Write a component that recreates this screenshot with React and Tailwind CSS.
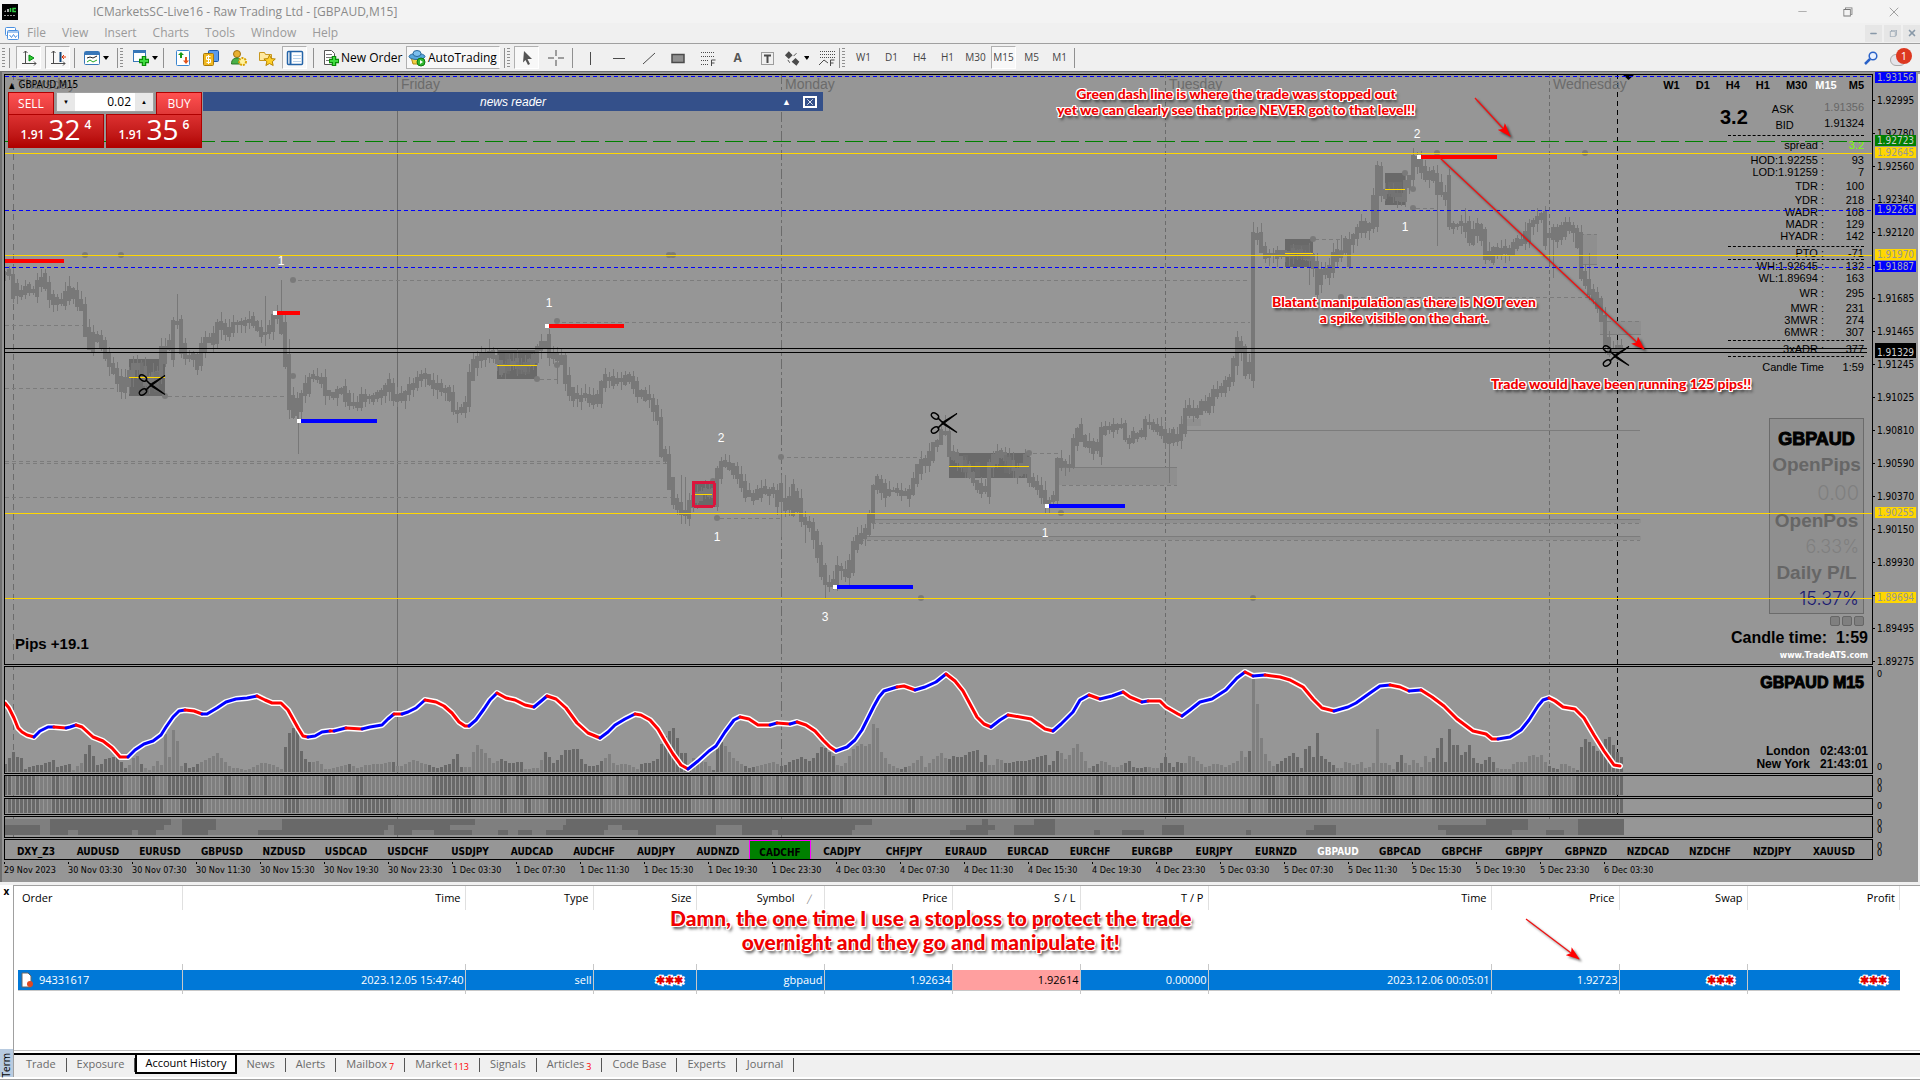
import { useState } from 'react';
import { FiMinus, FiX } from 'react-icons/fi';
import { VscChromeRestore } from 'react-icons/vsc';

const MENU = ['File', 'View', 'Insert', 'Charts', 'Tools', 'Window', 'Help'];
const PERIODS = ['W1', 'D1', 'H4', 'H1', 'M30', 'M15', 'M5', 'M1'];
const SYMBOLS = [
  'DXY_Z3', 'AUDUSD', 'EURUSD', 'GBPUSD', 'NZDUSD', 'USDCAD', 'USDCHF', 'USDJPY', 'AUDCAD', 'AUDCHF',
  'AUDJPY', 'AUDNZD', 'CADCHF', 'CADJPY', 'CHFJPY', 'EURAUD', 'EURCAD', 'EURCHF', 'EURGBP', 'EURJPY',
  'EURNZD', 'GBPAUD', 'GBPCAD', 'GBPCHF', 'GBPJPY', 'GBPNZD', 'NZDCAD', 'NZDCHF', 'NZDJPY', 'XAUUSD',
];
const TIMES = [
  '29 Nov 2023', '30 Nov 03:30', '30 Nov 07:30', '30 Nov 11:30', '30 Nov 15:30', '30 Nov 19:30', '30 Nov 23:30',
  '1 Dec 03:30', '1 Dec 07:30', '1 Dec 11:30', '1 Dec 15:30', '1 Dec 19:30', '1 Dec 23:30',
  '4 Dec 03:30', '4 Dec 07:30', '4 Dec 11:30', '4 Dec 15:30', '4 Dec 19:30', '4 Dec 23:30',
  '5 Dec 03:30', '5 Dec 07:30', '5 Dec 11:30', '5 Dec 15:30', '5 Dec 19:30', '5 Dec 23:30', '6 Dec 03:30',
];
const PRICES = [
  '1.92995', '1.92780', '1.92560', '1.92340', '1.92120', '', '1.91685', '1.91465', '1.91245',
  '1.91025', '1.90810', '1.90590', '1.90370', '1.90150', '1.89930', '', '1.89495', '1.89275',
];

// close line, [x, y] in window pixels
const CLOSES = [
  [5, 272], [14, 275], [16, 295], [22, 293], [27, 287], [35, 292], [39, 282], [43, 277], [49, 289], [53, 300], [65, 303],
  [69, 289], [73, 290], [78, 298], [84, 309], [87, 329], [91, 348], [96, 335], [102, 337], [106, 352], [110, 362],
  [116, 370], [120, 381], [122, 392], [127, 383], [131, 375], [137, 362], [143, 368], [147, 385], [155, 377], [162, 372],
  [165, 338], [171, 357], [174, 322], [180, 322], [182, 342], [186, 357], [196, 355], [200, 366], [204, 343], [210, 335],
  [216, 341], [219, 323], [224, 327], [229, 335], [235, 323], [245, 322], [253, 318], [261, 330], [265, 333], [271, 331],
  [275, 315], [282, 315], [286, 347], [289, 373], [292, 408], [298, 420], [301, 387], [306, 398], [309, 378], [322, 377],
  [327, 392], [335, 393], [345, 387], [349, 403], [359, 405], [365, 397], [376, 397], [384, 393], [392, 383], [397, 402],
  [402, 397], [410, 390], [420, 378], [427, 375], [433, 385], [441, 388], [451, 392], [455, 410], [461, 412], [469, 403],
  [471, 377], [477, 360], [488, 353], [497, 355], [504, 373], [512, 360], [522, 368], [535, 360], [539, 347], [545, 342],
  [546, 325], [549, 355], [563, 357], [567, 378], [571, 390], [578, 400], [584, 395], [598, 403], [604, 383], [610, 375],
  [616, 382], [633, 378], [640, 393], [652, 398], [656, 410], [660, 420], [662, 450], [669, 460], [671, 480], [675, 500],
  [679, 505], [687, 515], [693, 500], [703, 493], [712, 490], [714, 512], [718, 477], [724, 462], [734, 468], [742, 477],
  [746, 493], [756, 498], [762, 488], [771, 492], [779, 487], [781, 523], [785, 490], [791, 512], [797, 482], [801, 518],
  [813, 525], [818, 543], [822, 563], [826, 583], [836, 583], [838, 568], [844, 570], [850, 575], [854, 547], [860, 538],
  [867, 532], [872, 518], [875, 487], [881, 477], [885, 495], [893, 490], [909, 495], [916, 480], [922, 460], [930, 465],
  [933, 447], [940, 442], [944, 430], [948, 433], [950, 452], [958, 457], [967, 467], [975, 480], [987, 493], [991, 467],
  [999, 452], [1007, 458], [1020, 475], [1028, 458], [1030, 477], [1038, 485], [1042, 488], [1046, 505], [1056, 497],
  [1058, 462], [1073, 465], [1075, 443], [1079, 427], [1085, 442], [1093, 443], [1099, 455], [1101, 430], [1124, 425],
  [1126, 437], [1132, 442], [1136, 432], [1142, 435], [1148, 422], [1162, 428], [1164, 435], [1169, 443], [1171, 433],
  [1177, 443], [1183, 430], [1189, 405], [1197, 415], [1203, 402], [1207, 412], [1213, 395], [1224, 388], [1232, 378],
  [1240, 340], [1246, 355], [1249, 383], [1252, 373], [1253, 233], [1260, 235], [1263, 250], [1270, 255], [1283, 253],
  [1290, 257], [1297, 250], [1312, 257], [1317, 268], [1320, 292], [1323, 272], [1330, 273], [1337, 252], [1343, 252],
  [1347, 265], [1348, 242], [1357, 237], [1362, 223], [1368, 230], [1375, 223], [1377, 168], [1382, 168], [1383, 195],
  [1390, 190], [1403, 200], [1407, 185], [1412, 177], [1413, 158], [1418, 158], [1423, 168], [1430, 180], [1437, 172],
  [1442, 203], [1447, 178], [1450, 225], [1457, 225], [1467, 223], [1470, 245], [1477, 227], [1482, 227], [1485, 245],
  [1488, 257], [1493, 258], [1497, 248], [1510, 253], [1517, 243], [1527, 240], [1530, 225], [1540, 217], [1545, 212],
  [1548, 245], [1555, 230], [1562, 240], [1565, 222], [1573, 227], [1579, 233], [1582, 270], [1587, 282], [1592, 293],
  [1598, 297], [1602, 313], [1605, 323], [1607, 340], [1612, 353], [1620, 347],
];

// long wicks: x, top, bottom
const SPIKES = [
  [69, 276, 300], [177, 294, 322], [221, 312, 340], [265, 296, 346], [281, 280, 322], [289, 339, 385], [298, 415, 454],
  [489, 339, 360], [557, 365, 384], [681, 475, 520], [685, 477, 522], [781, 500, 537], [785, 475, 498], [805, 518, 543],
  [825, 565, 598], [881, 475, 500], [945, 415, 435], [1045, 500, 513], [1081, 418, 440], [1169, 440, 483],
  [1253, 222, 240], [1261, 223, 240], [1309, 255, 285], [1341, 235, 262], [1377, 163, 175], [1437, 175, 246],
  [1465, 208, 225], [1549, 240, 265], [1553, 235, 278], [1589, 253, 290], [1617, 340, 358],
];

const VOLUMES = [
  [5, 8], [13, 20], [17, 15], [21, 14], [25, 3], [33, 6], [41, 7], [53, 12], [57, 5], [69, 8], [73, 2], [81, 9], [86, 20],
  [90, 29], [94, 11], [98, 5], [106, 14], [118, 15], [126, 2], [134, 16], [138, 16], [142, 5], [150, 2], [158, 12],
  [162, 5], [165, 38], [169, 15], [173, 42], [177, 31], [181, 6], [185, 9], [190, 3], [198, 9], [206, 12], [217, 19],
  [222, 13], [230, 5], [246, 2], [262, 9], [270, 8], [281, 3], [285, 25], [289, 39], [294, 45], [298, 40], [302, 15],
  [310, 9], [318, 11], [326, 2], [350, 8], [358, 3], [366, 7], [380, 8], [392, 11], [398, 5], [405, 8], [413, 12],
  [425, 8], [437, 4], [449, 8], [457, 18], [461, 5], [469, 5], [473, 20], [477, 27], [485, 19], [493, 9], [501, 13],
  [509, 9], [521, 10], [525, 3], [537, 4], [545, 20], [553, 9], [557, 12], [565, 22], [578, 23], [582, 10], [590, 5],
  [597, 7], [609, 18], [614, 7], [626, 8], [638, 2], [641, 8], [652, 10], [658, 14], [662, 32], [668, 40], [673, 44],
  [677, 34], [681, 19], [685, 19], [689, 5], [693, 14], [705, 10], [713, 2], [717, 28], [722, 30], [726, 24], [734, 13],
  [742, 7], [750, 4], [762, 7], [774, 10], [782, 5], [790, 11], [802, 15], [810, 10], [818, 20], [822, 26], [826, 23],
  [834, 15], [838, 4], [846, 10], [854, 25], [862, 28], [868, 23], [873, 48], [877, 44], [881, 20], [889, 8], [900, 3],
  [910, 6], [921, 16], [925, 5], [934, 14], [941, 19], [947, 12], [953, 16], [960, 14], [966, 18], [972, 21], [978, 22],
  [981, 10], [986, 19], [990, 3], [998, 14], [1006, 8], [1018, 11], [1026, 11], [1038, 15], [1046, 17], [1050, 3],
  [1058, 23], [1066, 12], [1073, 24], [1078, 29], [1082, 17], [1088, 4], [1094, 6], [1102, 12], [1114, 4], [1126, 9],
  [1130, 12], [1134, 3], [1145, 5], [1158, 4], [1165, 15], [1172, 4], [1178, 11], [1184, 7], [1190, 18], [1198, 10],
  [1206, 4], [1214, 9], [1226, 5], [1238, 11], [1242, 24], [1246, 12], [1249, 21], [1253, 93], [1257, 68], [1261, 34],
  [1265, 18], [1272, 5], [1280, 10], [1285, 14], [1295, 20], [1301, 4], [1305, 23], [1309, 26], [1313, 15], [1317, 39],
  [1321, 16], [1330, 9], [1340, 2], [1346, 11], [1354, 6], [1362, 11], [1366, 2], [1373, 9], [1377, 43], [1381, 9],
  [1387, 9], [1393, 3], [1401, 17], [1407, 5], [1413, 12], [1421, 5], [1425, 16], [1430, 8], [1434, 16], [1441, 34],
  [1445, 10], [1449, 43], [1453, 27], [1457, 27], [1462, 15], [1469, 27], [1474, 11], [1480, 7], [1490, 16], [1494, 8],
  [1498, 3], [1510, 3], [1514, 10], [1526, 10], [1530, 18], [1538, 15], [1542, 18], [1546, 7], [1550, 5], [1558, 3],
  [1562, 10], [1570, 5], [1578, 2], [1582, 33], [1586, 33], [1590, 29], [1598, 20], [1605, 33], [1610, 36], [1614, 24],
  [1618, 18], [1622, 14],
];
const VOLUME_DARK = [
  [5, 70], [82, 126], [138, 143], [185, 201], [284, 312], [348, 352], [393, 397], [429, 462], [500, 522], [545, 604],
  [640, 692], [712, 724], [745, 756], [780, 836], [900, 908], [948, 988], [1005, 1060], [1092, 1100], [1124, 1148],
  [1160, 1182], [1248, 1252], [1276, 1336], [1394, 1404], [1430, 1496], [1548, 1560], [1576, 1626],
];
const TREND_DARK = [
  [5, 12], [17, 35], [46, 48], [52, 58], [70, 122], [138, 157], [166, 203], [225, 232], [246, 250], [264, 268], [282, 299],
  [325, 335], [357, 364], [430, 476], [484, 488], [501, 508], [517, 528], [548, 604], [617, 620], [629, 692], [701, 704],
  [709, 714], [732, 752], [758, 762], [774, 780], [788, 802], [812, 830], [845, 848], [885, 889], [950, 966], [975, 986],
  [1010, 1026], [1035, 1048], [1094, 1102], [1132, 1136], [1162, 1166], [1177, 1182], [1205, 1208], [1258, 1275],
  [1287, 1300], [1308, 1330], [1357, 1364], [1377, 1396], [1410, 1414], [1430, 1492], [1517, 1522], [1549, 1558], [1574, 1626],
];
const MOMENTUM_DARK = [
  [9, 40], [50, 126], [138, 164], [178, 202], [284, 300], [348, 392], [452, 472], [498, 508], [524, 532], [548, 604],
  [640, 690], [711, 716], [740, 845], [907, 916], [950, 988], [1016, 1056], [1092, 1100], [1163, 1184], [1248, 1252],
  [1268, 1328], [1380, 1420], [1430, 1528], [1552, 1626],
];
const BLOCKS = [
  [[50, 171], [182, 216], [282, 475], [566, 872], [982, 988], [1034, 1055], [1486, 1528], [1578, 1624]],
  [[5, 40], [50, 164], [182, 216], [282, 388], [394, 450], [563, 608], [622, 716], [742, 855], [966, 995], [1014, 1055], [1162, 1184], [1314, 1336], [1438, 1528], [1578, 1624]],
  [[5, 40], [50, 68], [78, 132], [138, 156], [182, 208], [258, 384], [394, 412], [434, 472], [498, 508], [518, 532], [546, 604], [638, 716], [742, 772], [778, 852], [950, 988], [1014, 1055], [1094, 1100], [1122, 1144], [1162, 1184], [1246, 1251], [1306, 1336], [1446, 1512], [1546, 1564], [1578, 1624]],
];

// oscillator runs, colour flips on every entry: red, blue, red...
const WAVE = [
  [[5, 703], [9, 708], [14, 718], [18, 728], [22, 732], [27, 735], [34, 737]],
  [[40, 731], [48, 727], [54, 727]], [[66, 728]], [[70, 727], [76, 725]],
  [[82, 727], [93, 737], [103, 741], [112, 748], [120, 757], [128, 757]],
  [[135, 750], [144, 744], [153, 741], [161, 735], [166, 727], [173, 717], [179, 711], [185, 710]],
  [[194, 711], [202, 714]], [[207, 714], [217, 708], [226, 702], [236, 699], [247, 698], [257, 696]],
  [[265, 700], [272, 703], [281, 703], [288, 710], [293, 719], [298, 728], [303, 736], [308, 737]],
  [[315, 736], [322, 732], [330, 731]], [[334, 731]], [[346, 728]], [[362, 729]],
  [[370, 727], [382, 725], [388, 719], [394, 714]], [[402, 714]], [[408, 712], [416, 708], [425, 700]],
  [[436, 702], [444, 706], [452, 713], [459, 722], [465, 726], [469, 726]],
  [[476, 720], [484, 709], [490, 700], [497, 693]], [[506, 698], [515, 700], [525, 705], [534, 707]],
  [[540, 702], [547, 696]], [[556, 699], [566, 708], [577, 723], [588, 733], [600, 738]],
  [[608, 732], [615, 725], [625, 719], [635, 714]],
  [[641, 715], [650, 720], [658, 729], [665, 741], [673, 754], [681, 765], [688, 769]],
  [[698, 761], [709, 751], [716, 746], [725, 732], [734, 720], [740, 717]], [[749, 719], [758, 725], [770, 725]],
  [[777, 723]], [[790, 724]], [[797, 722]], [[806, 725], [815, 731], [823, 740], [830, 747], [836, 751]],
  [[847, 747], [855, 740], [862, 730], [868, 718], [874, 706], [879, 697], [884, 691], [897, 687]],
  [[904, 686], [915, 690]], [[925, 687], [936, 682], [946, 674]],
  [[955, 681], [963, 691], [970, 704], [977, 717], [984, 724], [991, 727]], [[1000, 720], [1008, 715]],
  [[1020, 717], [1031, 719], [1045, 729], [1053, 731]], [[1061, 724], [1073, 712], [1080, 700], [1089, 695]],
  [[1100, 699]], [[1112, 696], [1123, 692]], [[1130, 697], [1142, 702]], [[1148, 701]],
  [[1160, 701], [1166, 707], [1178, 714], [1182, 716]],
  [[1190, 710], [1200, 702], [1212, 699], [1226, 690], [1237, 678], [1245, 672]], [[1253, 676]], [[1265, 675]],
  [[1280, 677], [1290, 680], [1303, 687], [1313, 699], [1322, 708], [1334, 711]],
  [[1348, 707], [1356, 703], [1370, 693], [1380, 686], [1390, 685]], [[1400, 687], [1409, 691]], [[1421, 690]],
  [[1432, 697], [1444, 706], [1457, 719], [1473, 731], [1486, 734], [1492, 739], [1498, 739]],
  [[1510, 737], [1521, 730], [1529, 720], [1538, 706], [1543, 700], [1549, 698]],
  [[1555, 701], [1563, 707], [1575, 709], [1584, 718], [1594, 735], [1604, 751], [1614, 765], [1620, 766]],
];

const COLUMNS = [
  { label: 'Order', width: 'w-[164px]' },
  { label: 'Time', width: 'w-[283px]', value: '2023.12.05 15:47:40' },
  { label: 'Type', width: 'w-32', value: 'sell' },
  { label: 'Size', width: 'w-[103px]', masked: true },
  { label: 'Symbol', width: 'w-32', value: 'gbpaud' },
  { label: 'Price', width: 'w-32', value: '1.92634' },
  { label: 'S / L', width: 'w-32', value: '1.92614', hit: true },
  { label: 'T / P', width: 'w-32', value: '0.00000' },
  { label: 'Time', width: 'w-[283px]', value: '2023.12.06 00:05:01' },
  { label: 'Price', width: 'w-32', value: '1.92723' },
  { label: 'Swap', width: 'w-32', masked: true },
  { label: 'Profit', width: '', masked: true },
];
const TABS = [
  ['Trade'], ['Exposure'], ['Account History'], ['News'], ['Alerts'], ['Mailbox', 7], ['Market', 113],
  ['Signals'], ['Articles', 3], ['Code Base'], ['Experts'], ['Journal'],
];

const X_BARS = Array.from({ length: 405 }, (_, i) => 5 + i * 4);

const sample = (points, x) => {
  const i = points.findIndex((p) => p[0] >= x);
  if (i === -1) return points[points.length - 1][1];
  if (i === 0) return points[0][1];
  const [x0, y0] = points[i - 1];
  const [x1, y1] = points[i];
  return Math.round(y0 + ((y1 - y0) * (x - x0)) / (x1 - x0));
};

const noise = (i) => {
  const n = Math.sin(i * 12.9898) * 43758.5453;
  return n - Math.floor(n);
};

const inRanges = (ranges, x) => ranges.some(([a, b]) => x >= a && x < b);

const Candles = () => {
  let bodies = '';
  let wicks = '';
  X_BARS.forEach((x, i) => {
    const open = sample(CLOSES, x - 2);
    const close = sample(CLOSES, x + 3);
    const top = Math.min(open, close) - Math.round(noise(i) * 4);
    const bottom = Math.max(open, close) + 1 + Math.round(noise(i + 900) * 4);
    bodies += `M${x - 2} ${top}h4V${bottom}h-4z`;
    wicks += `M${x} ${top - Math.round(noise(i + 300) * 9)}h1V${bottom + Math.round(noise(i + 600) * 9)}h-1z`;
  });
  SPIKES.forEach(([x, top, bottom]) => {
    wicks += `M${x} ${top}h1V${bottom}h-1z`;
  });
  return (
    <g fill="#787878">
      <path d={bodies} />
      <path d={wicks} />
    </g>
  );
};

const DayLines = () => (
  <g fill="none" stroke="#6b6b6b" shapeRendering="crispEdges">
    <path d="M13.5 74V860" strokeDasharray="6 4" />
    <path d="M397.5 74V860" />
    <path d="M781.5 74V860" strokeDasharray="10 3 3 3" />
    <path d="M1165.5 74V860M1549.5 74V860" strokeDasharray="4 3" />
    <path d="M1617.5 74V846" stroke="#000" strokeDasharray="5 4" />
  </g>
);

const Scissors = ({ x, y }) => (
  <g transform={`translate(${x} ${y})`} fill="none" stroke="#000" strokeLinecap="round">
    <ellipse cx="-9" cy="-7" rx="4" ry="2.6" transform="rotate(35 -9 -7)" strokeWidth="1.4" />
    <ellipse cx="-9" cy="7" rx="4" ry="2.6" transform="rotate(-35 -9 7)" strokeWidth="1.4" />
    <path d="M-6 -5L-1 0M-6 5L-1 0" strokeWidth="1.6" />
    <path d="M-2 1.5L13 -9.5L0 -1.5zM-2 -1.5L13 9.5L0 1.5z" strokeWidth="1.2" fill="#000" />
  </g>
);

const ArrowHead = () => (
  <marker id="head" viewBox="0 0 14 10" refX="13" refY="5" markerWidth="14" markerHeight="10" markerUnits="userSpaceOnUse" orient="auto">
    <path d="M0 0L14 5L0 10L3 5z" fill="#f00" />
  </marker>
);

// panel top edges are given so every drawing shares the window's pixel grid
const Panel = ({ top, height, draw, children }) => (
  <div className={`relative mb-px overflow-hidden border border-black ${height}`}>
    <svg className="absolute inset-0 h-full w-full" aria-hidden="true">
      <g transform={`translate(-5 ${-top - 1})`}>
        <DayLines />
        {draw}
      </g>
    </svg>
    {children}
  </div>
);

const Stripes = ({ top, height, dark }) => (
  <g>
    {X_BARS.map((x) => (
      <rect key={x} x={x - 1} y={top} width="3" height={height} fill={inRanges(dark, x) ? '#696969' : '#7f7f7f'} />
    ))}
  </g>
);

const PriceDrawing = () => (
  <g>
    <g fill="#8f8f8f">
      <path d="M1055 467h122v18h-122zM1580 234h17v30h-17zM1600 321h41v13h-41zM872 519h769v4H872zM860 536h781v4H860zM1181 419h20v7h-20z" />
    </g>
    <g stroke="#7c7c7c" fill="none" shapeRendering="crispEdges">
      <path
        strokeDasharray="4 3"
        d="M5 325.5H87M5 388.5H116M298 280.5H1250M168 396.5H292M5 461.5H668M5 463.5H668M5 497.5H672M562 322.5H1250M787 457.5H922M720 518.5H780M1033 453.5H1061M872 523.5H1640M860 540.5H1640M1055 485.5H1177M1340 297.5H1590M1315 239.5H1340M1416 208.5H1435M1580 234.5H1597M1600 321.5H1640M540 379.5H557"
      />
      <path d="M1183 430.5H1640M872 519.5H1640M860 536.5H1640M1055 467.5H1177M1580 264.5H1597M1600 334.5H1641" />
    </g>
    <g fill="#696969">
      <path d="M129 359h36v37h-36zM497 350h40v29h-40zM693 482h20v24h-20zM949 453h80v25h-80zM1285 239h28v28h-28zM1385 173h20v32h-20z" />
    </g>
    <Candles />
    <g fill="#6f6f6f" fillOpacity="0.6">
      <path d="M140 362h4v20h-4zM154 372h5v20h-5zM505 352h5v22h-5zM516 362h14v12h-14zM963 455h5v18h-5zM975 462h5v15h-5zM1004 455h8v18h-8zM1290 245h20v14h-20zM1388 182h14v15h-14z" />
    </g>
    <g fill="#7a7a7a">
      {[[85, 255], [121, 255], [293, 280], [293, 376], [165, 396], [537, 379], [557, 321], [557, 365], [669, 255], [673, 255], [781, 457], [717, 518], [713, 481], [1029, 453], [1061, 513], [921, 598], [1253, 598], [1437, 153], [1585, 153], [1313, 239], [1405, 173], [1413, 189], [1413, 208], [1341, 253], [1341, 297]].map(([x, y]) => (
        <circle key={`${x}-${y}`} cx={x} cy={y} r="3" />
      ))}
    </g>
    <g shapeRendering="crispEdges">
      <path d="M129 377.5h36M497 365.5h40M695 494.5h17M949 466.5h80M1285 253.5h28M1385 189.5h20" stroke="#ffd700" />
      <rect x="693" y="482" width="21" height="24" rx="1" fill="none" stroke="#dc143c" strokeWidth="3" />
      <path d="M5 261h59M277 313h23M548 326h76M1419 157h78" stroke="#f00" strokeWidth="4" />
      <path d="M300 421h77M836 587h77M1048 506h77" stroke="#00f" strokeWidth="4" />
      <path d="M273 311h4v4h-4zM545 324h4v4h-4zM1417 155h4v4h-4zM297 419h4v4h-4zM833 585h4v4h-4zM1045 504h4v4h-4z" fill="#fff" />
      <line x1="5" x2="100%" y1="348.5" y2="348.5" stroke="#000" />
      <line x1="5" x2="100%" y1="352.5" y2="352.5" stroke="#000" />
    </g>
    <Scissors x={152} y={385} />
    <Scissors x={944} y={423} />
    <Scissors x={1616} y={356} />
    <g fill="#fff" fontSize="12" textAnchor="middle" fontFamily="Liberation Sans, sans-serif">
      {[['1', 281, 265], ['1', 549, 307], ['2', 721, 442], ['1', 717, 541], ['3', 825, 621], ['1', 1045, 537], ['2', 1417, 138], ['1', 1405, 231]].map(([n, x, y]) => (
        <text key={`${x}`} x={x} y={y}>{n}</text>
      ))}
    </g>
    <g fill="#6b6b6b" fontSize="14" fontFamily="Liberation Sans, sans-serif">
      <text x="17" y="89">Thursday</text>
      <text x="401" y="89">Friday</text>
      <text x="785" y="89">Monday</text>
      <text x="1169" y="89">Tuesday</text>
      <text x="1553" y="89">Wednesday</text>
    </g>
    <path d="M1623 75h11l-5.500 5z" fill="#000" />
  </g>
);

const LevelLines = () => (
  <svg className="pointer-events-none absolute inset-0 h-full w-full" aria-hidden="true">
    <g transform="translate(0 -75)" shapeRendering="crispEdges">
      {[153.5, 255.5, 513.5, 598.5].map((y) => (
        <line key={y} x2="100%" y1={y} y2={y} stroke="#ffd700" />
      ))}
      {[76.5, 210.5, 267.5].map((y) => (
        <line key={y} x2="100%" y1={y} y2={y} stroke="#00f" strokeDasharray="4 3" />
      ))}
      <line x2="100%" y1="141.5" y2="141.5" stroke="#008000" strokeDasharray="18 6" />
    </g>
    <g transform="translate(-5 -75)">
      <defs>
        <ArrowHead />
      </defs>
      <g stroke="#f01010" strokeWidth="1.300" className="drop-shadow-[2px_2px_1px_rgba(0,0,0,0.5)]">
        <line x1="1475" y1="98" x2="1510" y2="136" markerEnd="url(#head)" />
        <line x1="1440" y1="158" x2="1644" y2="349" markerEnd="url(#head)" />
      </g>
    </g>
  </svg>
);

const Callout = ({ className, children }) => (
  <p
    className={`absolute text-center font-['Lato',sans-serif] font-black whitespace-nowrap text-[#f00000] [text-shadow:1px_0_#fff,-1px_0_#fff,0_1px_#fff,0_-1px_#fff,1px_1px_#fff,-1px_-1px_#fff,1px_-1px_#fff,-1px_1px_#fff,2px_3px_3px_rgba(0,0,0,0.7)] ${className}`}
  >
    {children}
  </p>
);

const StatRow = ({ label, value, height = 'h-3', tone = '' }) => (
  <div className={`flex items-center ${height}`}>
    <dt className="w-24 flex-none text-right whitespace-nowrap">
      <span className="-ml-10">{label} :</span>
    </dt>
    <dd className={`flex-1 text-right ${tone}`}>{value}</dd>
  </div>
);

const Stats = () => (
  <section className="absolute top-0 right-2 font-['Liberation_Sans',sans-serif] text-[11px] leading-3 text-black">
    <ul className="flex h-5 items-center justify-end gap-4 font-bold">
      {PERIODS.slice(0, 7).map((p) => (
        <li key={p} className={p === 'M15' ? '-mx-1 text-white' : p === 'M30' ? '-mr-1' : ''}>{p}</li>
      ))}
    </ul>
    <div className="ml-auto flex h-10 w-36 items-center pt-1">
      <strong className="text-xl">3.2</strong>
      <div className="w-[62px] pr-4 text-right leading-4">ASK<br />BID</div>
      <div className="flex-1 pb-1 text-right leading-4"><span className="text-[#666]">1.91356</span><br />1.91324</div>
    </div>
    <dl className="ml-auto w-[136px]">
      <div className="border-y border-dashed border-black">
        <StatRow label="spread" value="3.2" height="h-[17px]" tone="text-[#7fff00]" />
      </div>
      <div className="border-b border-dashed border-black pb-1">
        <StatRow label="HOD:1.92255" value="93" />
        <StatRow label="LOD:1.91259" value="7" />
        <StatRow label="TDR" value="100" height="h-4" />
        <StatRow label="YDR" value="218" />
        <StatRow label="WADR" value="108" />
        <StatRow label="MADR" value="129" />
        <StatRow label="HYADR" value="142" />
      </div>
      <div className="border-b border-dashed border-black">
        <StatRow label="PTO" value="-71" />
      </div>
      <div className="border-b border-dashed border-black pb-0.5">
        <StatRow label="WH:1.92645" value="132" />
        <StatRow label="WL:1.89694" value="163" />
        <StatRow label="WR" value="295" height="h-[18px]" />
        <StatRow label="MWR" value="231" />
        <StatRow label="3MWR" value="274" />
        <StatRow label="6MWR" value="307" />
      </div>
      <div className="border-b border-dashed border-black">
        <StatRow label="3xADR" value="377" height="h-[15px]" />
      </div>
      <div className="flex h-5 items-center">
        <dt className="w-24 text-right">Candle Time</dt>
        <dd className="flex-1 text-right">1:59</dd>
      </div>
    </dl>
  </section>
);

const AccountCard = () => (
  <section className="absolute right-1 bottom-0.5 flex flex-col items-end font-['Liberation_Sans',sans-serif] font-bold text-black">
    <div className="mr-1 flex h-[196px] w-[95px] flex-col border border-[#6b6b6b] bg-[#8f8f8f] px-1 pt-1 text-center text-[#666]">
      <h2 className="h-8 text-lg leading-8 text-black [-webkit-text-stroke:1px_black]">GBPAUD</h2>
      <p className="flex h-6 justify-center text-[19px] leading-5 whitespace-nowrap">OpenPips</p>
      <p className="h-8 text-right font-['Inter',sans-serif] text-xl font-light text-[#7f7f7f]">0.00</p>
      <p className="flex h-6 justify-center text-[19px] leading-5 whitespace-nowrap">OpenPos</p>
      <p className="h-7 text-right font-['Inter',sans-serif] text-lg leading-6 font-light text-[#7f7f7f]">6.33%</p>
      <p className="h-6 text-[19px] leading-5 whitespace-nowrap">Daily P/L</p>
      <p className="text-right font-['Inter',sans-serif] text-lg leading-6 font-light text-[#191970]">15.37%</p>
    </div>
    <div className="mt-0.5 mr-1 flex gap-0.5">
      <span className="size-2.5 rounded-xs border border-[#666] bg-[#7f7f7f]" />
      <span className="size-2.5 rounded-xs border border-[#666] bg-[#7f7f7f]" />
      <span className="size-2.5 rounded-xs border border-[#666] bg-[#7f7f7f]" />
    </div>
    <p className="text-base leading-6 whitespace-pre">Candle time:  1:59</p>
    <p className="font-['DejaVu_Sans',sans-serif] text-[8px] leading-3 text-white">www.TradeATS.com</p>
  </section>
);

const QuoteBox = ({ big, pip }) => (
  <div className="flex h-[34px] flex-1 items-end justify-center gap-1 border border-[#b00000] bg-linear-to-b from-[#dc3030] to-[#b00000] pb-1 text-white">
    <span className="text-xs leading-4 font-semibold">1.91</span>
    <span className="text-[28px] leading-7">{big}</span>
    <span className="self-start pt-1 text-xs leading-3 font-semibold">{pip}</span>
  </div>
);

const OneClick = () => (
  <form className="absolute top-[17px] left-[3px] w-[194px] font-['Open_Sans',sans-serif]">
    <div className="flex justify-between">
      <button type="button" className="h-[22px] w-[46px] border border-b-0 border-[#b00000] bg-linear-to-b from-[#ff5050] to-[#e03838] text-xs text-white">SELL</button>
      <div className="flex h-5 w-[98px] border border-[#a0a0a0] bg-white">
        <button type="button" aria-label="Less volume" className="w-[18px] bg-[#e8e8e8] text-[6px] text-black">▼</button>
        <input aria-label="Volume" defaultValue="0.02" className="w-[60px] px-1 text-right text-xs text-black" />
        <button type="button" aria-label="More volume" className="w-[18px] bg-[#e8e8e8] text-[6px] text-black">▲</button>
      </div>
      <button type="button" className="h-[22px] w-[46px] border border-b-0 border-[#b00000] bg-linear-to-b from-[#ff5050] to-[#e03838] text-xs text-white">BUY</button>
    </div>
    <div className="flex gap-0.5">
      <QuoteBox big="32" pip="4" />
      <QuoteBox big="35" pip="6" />
    </div>
  </form>
);

const NewsReader = () => (
  <div className="absolute top-[17px] left-[198px] flex h-[19px] w-[620px] items-center bg-[#34508a] text-white">
    <span className="flex-1 text-center font-['Liberation_Sans',sans-serif] text-xs italic">news reader</span>
    <button type="button" aria-label="Collapse" className="absolute right-8 text-[9px]">▲</button>
    <button type="button" aria-label="Close news" className="absolute right-1.5 flex h-3 w-3.5 items-center justify-center border-2 border-white">
      <FiX size={10} />
    </button>
  </div>
);

const PriceTag = ({ className, children }) => (
  <span className={`absolute left-0.5 w-[41px] text-center text-[10px] leading-[11px] ${className}`}>{children}</span>
);

const PriceAxis = () => (
  <div className="relative h-[592px] pt-2.5 text-[10px] text-black">
    {PRICES.map((price, i) => (
      <div key={i} className="flex h-[33px] items-center before:mr-0.5 before:h-px before:w-0.5 before:bg-black">{price}</div>
    ))}
    <PriceTag className="-top-0.5 bg-[#0000ff] text-[#b0b0b0]">1.93156</PriceTag>
    <PriceTag className="top-[61px] bg-[#008000] text-[#d0d0d0]">1.92723</PriceTag>
    <PriceTag className="top-[73px] bg-[#ffd700] text-[#969696]">1.92645</PriceTag>
    <PriceTag className="top-[130px] bg-[#0000ff] text-[#b0b0b0]">1.92265</PriceTag>
    <PriceTag className="top-[175px] bg-[#ffd700] text-[#969696]">1.91970</PriceTag>
    <PriceTag className="top-[187px] bg-[#0000ff] text-[#b0b0b0]">1.91887</PriceTag>
    <PriceTag className="top-[269px] bg-black pt-1 text-[#d0d0d0]">1.91329</PriceTag>
    <PriceTag className="top-[433px] bg-[#ffd700] text-[#969696]">1.90255</PriceTag>
    <PriceTag className="top-[518px] bg-[#ffd700] text-[#969696]">1.89694</PriceTag>
  </div>
);

const Wave = () => {
  const runs = WAVE.map((run, i) => (i === 0 ? run : [WAVE[i - 1][WAVE[i - 1].length - 1], ...run]));
  return (
    <g fill="none" strokeLinejoin="round" strokeLinecap="round">
      <polyline points={WAVE.flat().join(' ')} stroke="#fff" strokeWidth="6" />
      {runs.map((run, i) => (
        <polyline key={i} points={run.join(' ')} stroke={i % 2 ? '#00f' : '#f00'} strokeWidth="3" />
      ))}
    </g>
  );
};

const ChartWindow = () => (
  <main className="flex border-t border-l-2 border-[#707070] bg-[#969696] pt-0.5 pl-0.5">
    <div className="min-w-0 flex-1">
      <Panel top={74} height="h-[591px]" draw={<PriceDrawing />}>
        <p className="absolute top-1 left-1 font-['DejaVu_Sans_Condensed',sans-serif] text-[10px] leading-3 text-black">
          <span className="mr-1 text-[8px]">▲</span>GBPAUD,M15
        </p>
        <Stats />
        <AccountCard />
        <LevelLines />
        <OneClick />
        <NewsReader />
        <p className="absolute bottom-3 left-2.5 font-['Liberation_Sans',sans-serif] text-[15px] leading-4 font-bold text-black">Pips +19.1</p>
        <Callout className="top-[11px] left-[1052px] text-sm leading-4">
          Green dash line is where the trade was stopped out<br />yet we can clearly see that price NEVER got to that level!!
        </Callout>
        <Callout className="top-[219px] left-[1267px] text-sm leading-4">
          Blatant manipulation as there is NOT even<br />a spike visible on the chart.
        </Callout>
        <Callout className="top-[301px] left-[1486px] text-sm leading-4">Trade would have been running 125 pips!!</Callout>
      </Panel>
      <Panel
        top={666}
        height="h-[108px]"
        draw={
          <g>
            {X_BARS.map((x) => {
              const h = Math.max(1, sample(VOLUMES, x));
              return <rect key={x} x={x - 1} y={772 - h} width="3" height={h} fill={inRanges(VOLUME_DARK, x) ? '#696969' : '#7f7f7f'} />;
            })}
            <Wave />
          </g>
        }
      >
        <div className="absolute inset-y-0 right-1 flex flex-col items-end justify-between font-['Liberation_Sans',sans-serif] font-bold text-black">
          <h2 className="mr-1 pt-1 text-base leading-6 whitespace-pre [-webkit-text-stroke:1px_black]">GBPAUD M15</h2>
          <dl className="grid grid-cols-[auto_auto] gap-x-2.5 pb-0.5 text-right text-xs leading-[13px]">
            <dt>London</dt>
            <dd>02:43:01</dd>
            <dt>New York</dt>
            <dd>21:43:01</dd>
          </dl>
        </div>
      </Panel>
      <Panel top={775} height="h-[22px]" draw={<Stripes top={776} height={19} dark={TREND_DARK} />} />
      <Panel top={798} height="h-[17px]" draw={<Stripes top={799} height={14} dark={MOMENTUM_DARK} />} />
      <Panel
        top={816}
        height="h-[22px]"
        draw={
          <g shapeRendering="crispEdges">
            <rect x="5" y="819" width="1619" height="16" fill="#7f7f7f" />
            {BLOCKS.map((tier, t) =>
              tier.map(([a, b]) => (
                <rect key={`${t}-${a}`} x={a} y={[819, 825, 830][t]} width={b - a} height={[6, 5, 5][t]} fill="#696969" />
              ))
            )}
          </g>
        }
      />
      <nav className="flex h-[21px] border border-black font-['DejaVu_Sans_Condensed',sans-serif] text-[10px] font-bold text-black">
        {SYMBOLS.map((s) => (
          <a
            key={s}
            href={`#${s}`}
            className={`flex w-[62px] items-center justify-center pt-1 ${s === 'CADCHF' ? 'border border-b-0 border-[#ff00ff] bg-[#008000]' : ''} ${s === 'GBPAUD' ? 'text-white' : ''}`}
          >
            {s}
          </a>
        ))}
      </nav>
      <ol className="flex h-[22px] font-['DejaVu_Sans_Condensed',sans-serif] text-[9px] text-black">
        {TIMES.map((t) => (
          <li key={t} className="w-16 pt-0.5 leading-3 whitespace-nowrap before:block before:h-0.5 before:w-px before:bg-black">{t}</li>
        ))}
      </ol>
    </div>
    <aside className="w-[47px] border-r-2 border-[#f0f0f0] font-['DejaVu_Sans_Condensed',sans-serif]">
      <PriceAxis />
      <div className="flex flex-col pl-1 text-[9px] leading-2 text-black">
        <span className="flex h-[109px] flex-col justify-between py-1"><span>0</span><span>0</span></span>
        <span className="h-[23px] pt-1 leading-[7px]">0<br />0</span>
        <span className="h-[18px] pt-1 leading-2">0</span>
        <span className="h-[23px] pt-1 leading-[7px]">0<br />0</span>
        <span className="h-[21px] pt-1 leading-[7px]">0<br />0</span>
      </div>
    </aside>
  </main>
);

const Grip = () => <span className="mr-1 ml-0.5 h-5 w-[3px] bg-[repeating-linear-gradient(#909090_0_1px,transparent_1px_3px)]" />;
const Divider = () => <span className="h-5 w-px bg-[#909090]" />;

const Tool = ({ label, active, width = 'w-[25px]', children }) => (
  <button
    type="button"
    aria-label={label}
    className={`flex h-[23px] items-center justify-center gap-0.5 text-black ${width} ${active ? 'border border-[#b0b0b0] border-r-white border-b-white bg-[#f8f8f8]' : ''}`}
  >
    {children}
  </button>
);

const Icon = ({ children }) => (
  <svg width="18" height="18" viewBox="0 0 18 18" fill="none" stroke="#4b4b4b" aria-hidden="true">
    {children}
  </svg>
);

const Caret = () => (
  <svg width="6" height="4" viewBox="0 0 6 4" aria-hidden="true">
    <path d="M0 0h6L3 4z" />
  </svg>
);
const Plus = () => <path d="M12 7v10M7 12h10" stroke="#0a8a0a" strokeWidth="4.500" />;
const PlusCore = () => <path d="M12 8v8M8 12h8" stroke="#3fdc3f" strokeWidth="2" />;

const Toolbar = () => (
  <div className="flex h-7 items-center border-t border-[#a0a0a0] bg-[#f0f0f0] font-['Open_Sans',sans-serif] text-xs">
    <Grip />
    <Divider />
    <div className="flex w-[64px] gap-1 pl-1.5">
      <Tool label="Auto scroll" active>
        <Icon><path d="M5.500 2v13M2 14.500h14M3.500 4l2-2 2 2M14 12.500l2 2-2 2" /><path d="M9 6l5 3-5 3z" fill="#3c3" stroke="#081" /></Icon>
      </Tool>
      <Tool label="Chart shift" active>
        <Icon><path d="M4.500 2v13M2 14.500h14M2.500 4l2-2 2 2M14 12.500l2 2-2 2" /><path d="M11.500 3v10" stroke="#147" strokeWidth="2" /><path d="M17 8h-4M15 6l-2 2 2 2" stroke="#d30" /></Icon>
      </Tool>
    </div>
    <Divider />
    <Tool label="Templates" width="w-[42px]">
      <Icon><rect x="1.500" y="2.500" width="15" height="13" rx="1" fill="#fff" stroke="#3877b8" /><path d="M2 4.500h14" stroke="#3877b8" strokeWidth="3" /><path d="M4 9l3-1 3 1 4-2" stroke="#222" /><path d="M4 13l3-2 3 2 4-2" stroke="#2a2" /></Icon>
      <Caret />
    </Tool>
    <Divider />
    <Grip />
    <Tool label="New chart" width="w-9">
      <Icon><rect x="1.500" y="1.500" width="12" height="11" fill="#fff" stroke="#3877b8" /><path d="M2 3h11" stroke="#3877b8" strokeWidth="2" /><Plus /><PlusCore /></Icon>
      <Caret />
    </Tool>
    <Divider />
    <div className="flex gap-[3px] px-1.5">
      <Tool label="Market watch">
        <Icon><rect x="2.500" y="1.500" width="13" height="15" rx="1" fill="#fff" stroke="#3a86d0" /><path d="M7 3l3 3H8v3H6V6H4z" fill="#1a9a1a" stroke="none" /><path d="M12 15l3-3.500h-2V8h-2v3.500H9z" fill="#e2521c" stroke="none" /></Icon>
      </Tool>
      <Tool label="Data window">
        <Icon><rect x="6.500" y="1.500" width="10" height="11" rx="1" fill="#5b9bea" stroke="#1b59a8" /><rect x="1.500" y="4.500" width="10" height="12" rx="1" fill="#f0b820" stroke="#a87808" /><path d="M8.500 7.500h-4v3h4v3h-4M6.500 6v9" stroke="#fff" /></Icon>
      </Tool>
      <Tool label="Navigator">
        <Icon><circle cx="7" cy="5" r="3.500" fill="#e8b030" stroke="#a07010" /><path d="M1.500 15c0-5 3-6 5.500-6s4 1 4 3v3z" fill="#49b049" stroke="#287828" /><circle cx="12.500" cy="12.500" r="3.500" fill="#fff2a0" stroke="#d8a000" strokeWidth="2" strokeDasharray="2 1" /></Icon>
      </Tool>
      <Tool label="Favorites">
        <Icon><path d="M1.500 3.500h5l1 2h6v6h-12z" fill="#ffe9a0" stroke="#c89820" /><path d="M11.500 6l1.800 3.600 4 .4-3 2.700.9 3.800-3.700-2-3.600 2 1-3.800-3-2.700 4-.4z" fill="#ffd02a" stroke="#b88400" /></Icon>
      </Tool>
      <Tool label="Terminal" active>
        <Icon><rect x="1.500" y="2.500" width="15" height="13" rx="1" fill="#fff" stroke="#2464a8" strokeWidth="1.500" /><path d="M4.500 3v12" stroke="#2464a8" strokeWidth="2" /><path d="M7 6.500h8M7 9.500h8M7 12.500h8" stroke="#bcd3ea" /></Icon>
      </Tool>
    </div>
    <Divider />
    <button type="button" className="ml-2 flex w-[84px] items-center gap-px whitespace-nowrap text-black">
      <Icon><path d="M2.500 1.500h7l3 3v11h-10z" fill="#fff" stroke="#555" /><path d="M4 5.500h6M4 8.500h6M4 11.500h4" stroke="#777" /><Plus /><PlusCore /></Icon>
      New Order
    </button>
    <button type="button" className="flex h-[23px] w-[94px] items-center gap-0.5 border border-[#b0b0b0] border-r-white bg-[#f8f8f8] pl-px whitespace-nowrap text-black">
      <Icon><path d="M3 8l2 7h8l3-7z" fill="#f2cf45" stroke="#b08a10" /><ellipse cx="9" cy="7.500" rx="8" ry="3" fill="#56a6dc" stroke="#2a6a9c" /><ellipse cx="9" cy="4.500" rx="4" ry="3" fill="#7cc0ee" stroke="#2a6a9c" /><circle cx="13" cy="13" r="4" fill="#2fb62f" stroke="#0c7a0c" /><path d="M12 11l3 2-3 2z" fill="#fff" stroke="none" /></Icon>
      AutoTrading
    </button>
    <span className="w-1" />
    <Divider />
    <Grip />
    <Tool label="Cursor" active>
      <Icon><path d="M6 2l8 8H9.500l2.500 5-2 1-2.500-5L5 13.500z" fill="#555" stroke="none" /></Icon>
    </Tool>
    <Tool label="Crosshair" width="w-[33px]">
      <Icon><path d="M9 1v6M9 11v6M1 9h6M11 9h6" /></Icon>
    </Tool>
    <Divider />
    <div className="flex w-[266px] justify-between pl-1">
      <Tool label="Vertical line"><Icon><path d="M9.500 3v13" /></Icon></Tool>
      <Tool label="Horizontal line"><Icon><path d="M3 9.500h12" /></Icon></Tool>
      <Tool label="Trendline"><Icon><path d="M3 15L15 4" /></Icon></Tool>
      <Tool label="Rectangle"><Icon><rect x="3" y="5.500" width="12" height="8" fill="#909090" strokeWidth="1.500" /></Icon></Tool>
      <Tool label="Fibonacci"><Icon><path d="M2 3.500h14M2 7.500h14M2 11.500h8M2 15.500h8" strokeDasharray="1 1" /><path d="M12.500 17v-6h4M12.500 14h3" /></Icon></Tool>
      <Tool label="Text"><span className="text-xs font-bold text-[#555]">A</span></Tool>
      <Tool label="Text label"><Icon><rect x="3.500" y="3.500" width="12" height="12" strokeDasharray="1 1" /><path d="M6 6.500h7M9.500 6v8" strokeWidth="2" /></Icon></Tool>
      <Tool label="Arrows"><Icon><path d="M5 2l4 4-4 4-4-4zM12 9l4 4-3 4-5-4z" fill="#4b4b4b" stroke="none" /><path d="M4 11l2 3M10 7l3-3" /></Icon><Caret /></Tool>
      <Tool label="Indicators"><Icon><path d="M2 2.500h15M2 5.500h15M2 8.500h15" strokeDasharray="1 1" /><path d="M1 16l5-5 4 3M12.500 17v-6h4M12.500 14h3" /></Icon></Tool>
    </div>
    <Divider />
    <Grip />
    <div className="flex gap-[3px] px-0.5 text-[10px] text-[#444]">
      {PERIODS.map((p) => (
        <button
          key={p}
          type="button"
          className={`h-[23px] w-[25px] ${p === 'M15' ? 'border border-[#b0b0b0] border-r-white border-b-white bg-[#f8f8f8]' : ''}`}
        >
          {p}
        </button>
      ))}
    </div>
    <Divider />
    <div className="ml-auto flex items-center gap-3 pr-1.5">
      <button type="button" aria-label="Search">
        <svg width="14" height="14" viewBox="0 0 14 14" fill="none" stroke="#2a62c8" strokeWidth="1.500"><circle cx="9" cy="5" r="3.800" fill="#e8f0ff" /><path d="M6 8l-5 5" strokeWidth="2.500" /></svg>
      </button>
      <button type="button" aria-label="Notifications" className="relative h-5 w-6">
        <span className="absolute bottom-0.5 left-0 h-3 w-4 rounded-full border border-[#aaa] bg-[#e4e4ea]" />
        <span className="absolute top-0 right-0.5 size-4 rounded-full bg-[#dd3820] text-center text-[11px] leading-4 text-white">1</span>
      </button>
    </div>
  </div>
);

const Header = () => (
  <header className="font-['Open_Sans',sans-serif]">
    <div className="flex h-[23px] items-center bg-[#f3f3f3] pl-0.5 text-xs text-[#8a8a8a]">
      <svg width="16" height="16" viewBox="0 0 16 16" aria-hidden="true">
        <rect width="16" height="16" fill="#000" />
        <path d="M2 8l2-2v2zM5 8V5h2v3z" fill="#aaa" />
        <path d="M8.500 4v4M14 4.500h-3v3h3" stroke="#2ecc40" strokeWidth="1.500" fill="none" />
        <path d="M2 11.500h12" stroke="#999" strokeDasharray="2 1" />
      </svg>
      <h1 className="ml-[75px] whitespace-nowrap">ICMarketsSC-Live16 - Raw Trading Ltd - [GBPAUD,M15]</h1>
      <div className="ml-auto flex gap-8 pr-[18px] text-[#777]">
        <button type="button" aria-label="Minimize"><FiMinus size={13} strokeWidth={1} /></button>
        <button type="button" aria-label="Restore"><VscChromeRestore size={13} /></button>
        <button type="button" aria-label="Close"><FiX size={16} strokeWidth={1} /></button>
      </div>
    </div>
    <div className="flex h-5 items-center bg-[#f0f0f0] pl-1 text-xs text-[#9a9a9a]">
      <svg width="15" height="15" viewBox="0 0 15 15" fill="#fff" stroke="#4a90e0" aria-hidden="true">
        <rect x="1.500" y="1.500" width="10" height="8" rx="1" />
        <rect x="3.500" y="4.500" width="11" height="9" rx="1" />
        <path d="M4 6h10M5.500 9l2 2.500 2-3 2 3 1.500-2" fill="none" />
      </svg>
      <nav className="flex gap-4 pl-2">
        {MENU.map((m) => (
          <a key={m} href={`#${m}`}>{m}</a>
        ))}
      </nav>
      <div className="ml-auto flex gap-0.5 text-[#8898a8]">
        <button type="button" aria-label="Minimize chart" className="flex h-[17px] w-[17px] items-center justify-center bg-[#e6e6e6]"><FiMinus size={9} strokeWidth={4} /></button>
        <button type="button" aria-label="Restore chart" className="flex h-[17px] w-[17px] items-center justify-center bg-[#e6e6e6]"><VscChromeRestore size={10} /></button>
        <button type="button" aria-label="Close chart" className="flex h-[17px] w-[17px] items-center justify-center bg-[#e6e6e6]"><FiX size={10} strokeWidth={4} /></button>
      </div>
    </div>
    <Toolbar />
  </header>
);

const Masked = () => (
  <span className="mr-3 inline-block font-bold text-[#e00000] [text-shadow:1px_0_#fff,-1px_0_#fff,0_1px_#fff,0_-1px_#fff,1px_1px_#fff,-1px_-1px_#fff,2px_2px_#fff,-2px_1px_#fff,2px_-1px_#fff]">✱✱✱</span>
);

const Terminal = () => {
  const [tab, setTab] = useState('Account History');

  return (
    <section className="flex flex-1 border-b border-[#a0a0a0] bg-white pb-0.5 font-['Open_Sans',sans-serif] text-[11px]">
      <div className="flex w-3.5 flex-none flex-col items-center justify-between border-r border-[#a0a0a0] bg-white">
        <button type="button" aria-label="Close terminal" className="text-[10px] leading-3 font-bold text-black">x</button>
        <span className="h-7 w-full bg-[#b8cbe0] text-[10px] leading-3 text-black [writing-mode:sideways-lr]">Term</span>
      </div>
      <div className="relative flex min-w-0 flex-1 flex-col border-t border-[#a0a0a0]">
        <div className="flex-1 border-b border-[#c0c0c0] pr-5 pl-1">
          <table className="w-full table-fixed border-collapse text-right">
            <thead>
              <tr className="h-6 text-black">
                {COLUMNS.map((c, i) => (
                  <th key={i} scope="col" className={`border-r border-[#e0e0e0] px-1 font-normal ${c.width} ${i === 0 ? 'text-left' : ''}`}>
                    {c.label}
                    {c.label === 'Symbol' && <span className="mr-2 ml-3 text-[8px] text-[#888]">╱</span>}
                  </th>
                ))}
              </tr>
            </thead>
            <tbody>
              <tr className="h-[54px]"><td colSpan={12} /></tr>
              <tr className="h-1.5">
                {COLUMNS.map((c, i) => <td key={i} className="border-r border-[#c8c8c8] last:border-0" />)}
              </tr>
              <tr className="h-5 border-b border-[#c8c8c8] bg-[#0078d7] text-white">
                {COLUMNS.map((c, i) => (
                  <td key={i} className={`border-r border-[#c8c8c8] p-0 px-px leading-4 last:border-0 ${c.hit ? 'bg-[#ff9f9f] text-black' : ''}`}>
                    {i === 0 && (
                      <span className="flex items-center gap-1">
                        <svg width="16" height="16" viewBox="0 0 16 16" aria-hidden="true">
                          <path d="M3 1h6l3 3v11H3z" fill="#fff" stroke="#666" />
                          <circle cx="11" cy="12" r="3" fill="#e04820" />
                        </svg>
                        94331617
                      </span>
                    )}
                    {c.masked ? <Masked /> : c.value}
                  </td>
                ))}
              </tr>
              <tr className="h-1">
                {COLUMNS.map((c, i) => <td key={i} className="border-r border-[#c8c8c8] last:border-0" />)}
              </tr>
            </tbody>
          </table>
        </div>
        <Callout className="top-5 left-[656px] text-[21px] leading-6">
          Damn, the one time I use a stoploss to protect the trade<br />overnight and they go and manipulate it!
        </Callout>
        <svg className="absolute top-7 left-[1505px] drop-shadow-[2px_2px_1px_rgba(0,0,0,0.5)]" width="70" height="50" aria-hidden="true">
          <line x1="7" y1="5" x2="60" y2="45" stroke="#f01010" strokeWidth="1.300" markerEnd="url(#head)" />
        </svg>
        <div role="tablist" className="mt-0.5 flex h-6 border-t-2 border-black bg-[#f0f0f0] pl-0.5">
          {TABS.map(([name, count]) => (
            <button
              key={name}
              type="button"
              role="tab"
              aria-selected={tab === name}
              onClick={() => setTab(name)}
              className={`flex h-[19px] items-center ${tab === name ? 'border-x-2 border-b-2 border-black bg-white px-2 text-black' : 'text-[#6a6a6a]'}`}
            >
              <span className={tab === name ? '' : 'flex h-3.5 items-center border-r border-[#555] px-2.5'}>
                {name}
                {count && <sub className="ml-0.5 text-[9px] text-[#f00]">{count}</sub>}
              </span>
            </button>
          ))}
        </div>
      </div>
    </section>
  );
};

const App = () => (
  <div className="flex min-h-screen flex-col bg-[#f0f0f0]">
    <Header />
    <ChartWindow />
    <div className="h-[3px]" />
    <Terminal />
  </div>
);

export default App;
